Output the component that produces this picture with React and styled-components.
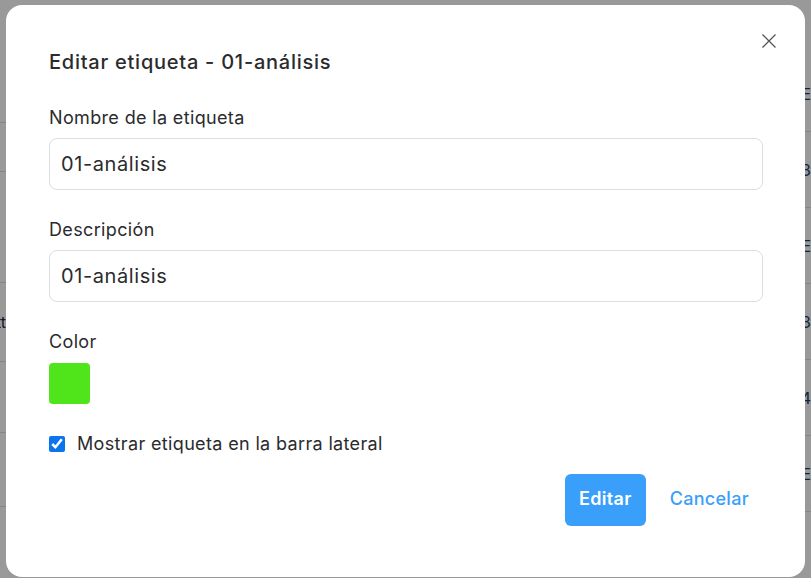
import React, { useState } from 'react';
import styled, { createGlobalStyle } from 'styled-components';

const GlobalStyle = createGlobalStyle`
  html, body { margin: 0; padding: 0; }
  body {
    font-family: Inter, "Noto Sans", "Liberation Sans", sans-serif;
    background: #fff;
    overflow: hidden;
  }
`;

const sideRows = [
  { h: 49, t: '' },
  { h: 49, t: '' },
  { h: 111, t: '' },
  { h: 79, t: 'Gantt' },
  { h: 71, t: '' },
  { h: 74, t: '' },
];
const tableRows = ['E', '3', 'E', '3', '4', 'E'];

const Page = styled.div`
  display: flex;
  width: 811px;
  height: 578px;
  background: #fff;
`;

const SideList = styled.div`
  width: 6px;
  overflow: hidden;
  padding-top: 74px;
`;

const SideItem = styled.div`
  height: ${p => p.$h}px;
  box-sizing: border-box;
  border-bottom: 1px solid #dcdcdc;
  display: flex;
  align-items: center;
  justify-content: flex-end;
  font-size: 16px;
  color: #1d2a44;
  white-space: nowrap;
`;

const Table = styled.div`
  flex: 1;
  padding-top: 56px;
`;

const TableRow = styled.div`
  height: 75px;
  border-bottom: 1px solid #dcdcdc;
  display: flex;
  align-items: center;
  justify-content: flex-end;
  font-size: 16px;
  color: #1d3d63;
`;

const Backdrop = styled.div`
  position: fixed;
  inset: 0;
  background: rgba(0, 0, 0, 0.4);
`;

const Modal = styled.div`
  position: fixed;
  left: 6px;
  top: 5px;
  width: 799px;
  height: 572px;
  box-sizing: border-box;
  background: #fff;
  border-radius: 16px;
  padding: 24px 42px 0 43px;
  display: flex;
  flex-direction: column;
`;

const Header = styled.div`
  display: flex;
  justify-content: space-between;
  align-items: flex-start;
  margin-bottom: 30px;
`;

const Title = styled.h2`
  margin: 19px 0 0;
  font-size: 20px;
  line-height: 28px;
  font-weight: 500;
  letter-spacing: 0.75px;
  color: #2b2b2e;
`;

const CloseButton = styled.button`
  width: 24px;
  height: 24px;
  margin-right: -18px;
  padding: 0;
  border: none;
  background: none;
  color: #555;
  display: flex;
  align-items: center;
  justify-content: center;
  cursor: pointer;
`;

const Field = styled.div`
  display: flex;
  flex-direction: column;
  margin-bottom: ${p => p.$gap || 28}px;
`;

const Label = styled.label`
  font-size: 18px;
  line-height: 24px;
  letter-spacing: 0.35px;
  color: #2b2b2e;
  margin-bottom: ${p => p.$gap || 8}px;
`;

const TextInput = styled.input`
  height: 52px;
  box-sizing: border-box;
  border: 1px solid #dcdce3;
  border-radius: 8px;
  padding: 0 11px;
  font-family: inherit;
  font-size: 20px;
  letter-spacing: 0.6px;
  color: #2b2b2e;
  outline: none;
`;

const Swatch = styled.div`
  width: 41px;
  height: 41px;
  border-radius: 4px;
  background: ${p => p.$color};
`;

const CheckRow = styled.label`
  display: flex;
  align-items: center;
  gap: 12px;
  font-size: 18px;
  line-height: 24px;
  letter-spacing: 0.35px;
  color: #2b2b2e;
  margin-bottom: 18px;
`;

const Checkbox = styled.input`
  width: 16px;
  height: 16px;
  margin: 0;
  accent-color: #0b75f0;
`;

const Actions = styled.div`
  display: flex;
  justify-content: flex-end;
  gap: 10px;
`;

const Button = styled.button`
  height: 52px;
  padding: 0 14px 3px;
  border: none;
  border-radius: 6px;
  font-family: inherit;
  font-size: 18px;
  letter-spacing: 0.3px;
  font-weight: ${p => (p.$primary ? 600 : 500)};
  background: ${p => (p.$primary ? '#3a9ffa' : 'transparent')};
  color: ${p => (p.$primary ? '#fff' : '#3a9ffa')};
  cursor: pointer;
`;

export default function App() {
  const [name, setName] = useState('01-análisis');
  const [desc, setDesc] = useState('01-análisis');
  const [show, setShow] = useState(true);

  return (
    <>
      <GlobalStyle />
      <Page>
        <SideList>
          {sideRows.map((r, i) => (
            <SideItem key={i} $h={r.h}>{r.t}</SideItem>
          ))}
        </SideList>
        <Table>
          {tableRows.map((t, i) => (
            <TableRow key={i}>{t}</TableRow>
          ))}
        </Table>
      </Page>
      <Backdrop />
      <Modal>
        <Header>
          <Title>Editar etiqueta - 01-análisis</Title>
          <CloseButton aria-label="Cerrar">
            <svg width="16" height="16" viewBox="0 0 16 16" fill="none" stroke="currentColor" strokeWidth="1.3">
              <path d="M1.5 1.5l13 13M14.5 1.5l-13 13" />
            </svg>
          </CloseButton>
        </Header>
        <Field>
          <Label>Nombre de la etiqueta</Label>
          <TextInput value={name} onChange={e => setName(e.target.value)} />
        </Field>
        <Field>
          <Label>Descripción</Label>
          <TextInput value={desc} onChange={e => setDesc(e.target.value)} />
        </Field>
        <Field>
          <Label $gap={9}>Color</Label>
          <Swatch $color="#50e51b" />
        </Field>
        <CheckRow>
          <Checkbox type="checkbox" checked={show} onChange={() => setShow(!show)} />
          Mostrar etiqueta en la barra lateral
        </CheckRow>
        <Actions>
          <Button $primary>Editar</Button>
          <Button>Cancelar</Button>
        </Actions>
      </Modal>
    </>
  );
}
